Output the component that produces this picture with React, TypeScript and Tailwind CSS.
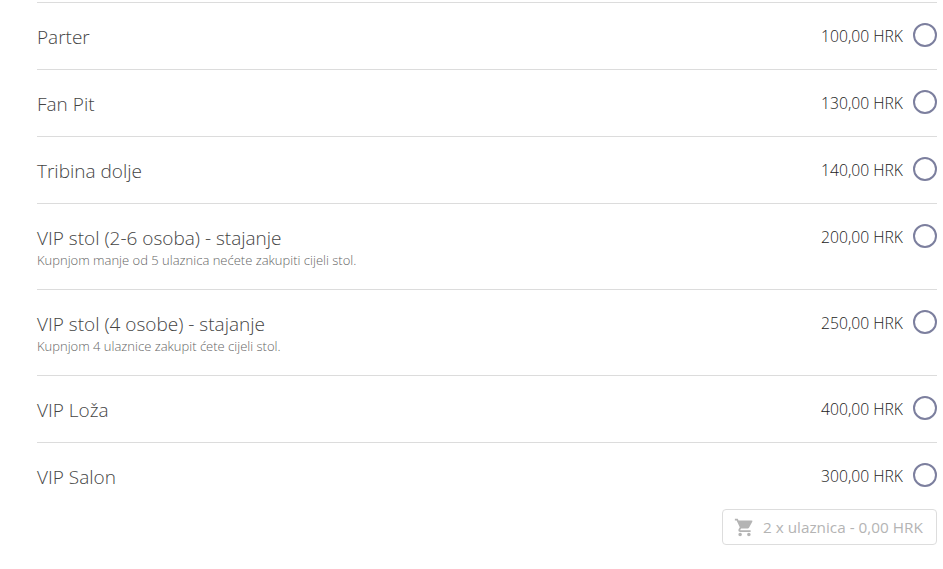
import { MdShoppingCart } from "react-icons/md";

interface Ticket {
  name: string;
  price: string;
  note?: string;
}

const tickets: Ticket[] = [
  { name: "Parter", price: "100,00 HRK" },
  { name: "Fan Pit", price: "130,00 HRK" },
  { name: "Tribina dolje", price: "140,00 HRK" },
  {
    name: "VIP stol (2-6 osoba) - stajanje",
    price: "200,00 HRK",
    note: "Kupnjom manje od 5 ulaznica nećete zakupiti cijeli stol.",
  },
  {
    name: "VIP stol (4 osobe) - stajanje",
    price: "250,00 HRK",
    note: "Kupnjom 4 ulaznice zakupit ćete cijeli stol.",
  },
  { name: "VIP Loža", price: "400,00 HRK" },
  { name: "VIP Salon", price: "300,00 HRK" },
];

const TicketRow = ({ ticket }: { ticket: Ticket }) => (
  <div
    className={`flex justify-between border-t border-[#dcdcdc] pt-[20px] ${
      ticket.note ? "h-[86px]" : "h-[67px]"
    }`}
  >
    <div>
      <div className="text-[19px] leading-[28px] font-light text-[#444444]">{ticket.name}</div>
      {ticket.note && (
        <div className="text-[13px] leading-[16px] font-light text-[#666666]">{ticket.note}</div>
      )}
    </div>
    <div className="flex h-[24px] items-center gap-[10px]">
      <span className="mt-[3px] text-[15.7px] font-light text-[#222222]">{ticket.price}</span>
      <span className="h-[24px] w-[24px] rounded-full border-2 border-[#7c7f9e]" />
    </div>
  </div>
);

const App = () => {
  return (
    <div
      className="h-[569px] w-[943px] overflow-hidden bg-white pl-[37px] pr-[6px] pt-[2px]"
      style={{ fontFamily: '"Open Sans", "Noto Sans", sans-serif' }}
    >
      {tickets.map((ticket) => (
        <TicketRow key={ticket.name} ticket={ticket} />
      ))}
      <div className="flex justify-end">
        <button
          type="button"
          className="flex h-[36px] w-[215px] items-center gap-[8px] rounded-[4px] border border-[#dddddd] pl-[11px] text-[15.3px] text-[#b4b4b4]"
        >
          <MdShoppingCart size={21} color="#b4b4b4" />
          <span>2 x ulaznica - 0,00 HRK</span>
        </button>
      </div>
    </div>
  );
};

export default App;
